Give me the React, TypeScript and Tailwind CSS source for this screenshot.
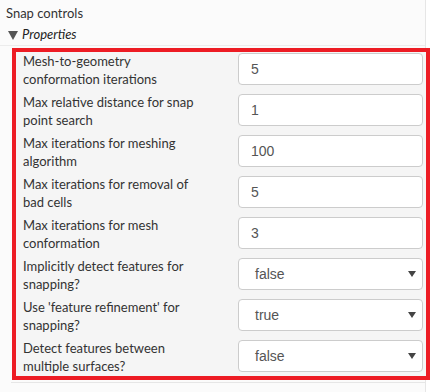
import React from "react";

type Row = { label: string; value: string; select?: boolean };

const rows: Row[] = [
  { label: "Mesh-to-geometry conformation iterations", value: "5" },
  { label: "Max relative distance for snap point search", value: "1" },
  { label: "Max iterations for meshing algorithm", value: "100" },
  { label: "Max iterations for removal of bad cells", value: "5" },
  { label: "Max iterations for mesh conformation", value: "3" },
  { label: "Implicitly detect features for snapping?", value: "false", select: true },
  { label: "Use 'feature refinement' for snapping?", value: "true", select: true },
  { label: "Detect features between multiple surfaces?", value: "false", select: true },
];

export default function App() {
  return (
    <div className="w-[433px] h-[392px] bg-white overflow-hidden" style={{ fontFamily: "Lato, 'Liberation Sans', sans-serif" }}>
      <div className="w-[426px] h-[392px] bg-[#fbfbfb] border-r border-[#e6e6e6] flex flex-col">
        <div className="h-[26px] pl-[6px] pt-[5px] text-[13px] leading-[17px] text-[#333]">Snap controls</div>
        <div className="h-[20px] flex items-start pl-[8px] border-b border-[#ececec] text-[13px] leading-[17px] text-[#222]">
          <svg width="10" height="10" viewBox="0 0 10 10" className="mt-[4px] mr-[4px]">
            <polygon points="0,1 10,1 5,10" fill="#555" />
          </svg>
          <span className="italic">Properties</span>
        </div>
        <div className="mt-[2px] ml-[12px] w-[418px] border-4 border-[#ed1c24] bg-[#f5f5f5] pt-[1px] pb-[4px] pl-[7px] pr-[3px] flex flex-col gap-[9px]">
          {rows.map((r, i) => (
            <div key={i} className="flex items-start h-[32px]">
              <div className="w-[172px] text-[13px] leading-[18px] text-[#333] -mt-[1px]">{r.label}</div>
              <div className="ml-auto w-[185px] h-[32px] bg-white border border-[#cccccc] rounded-[4px] flex items-center text-[14px] text-[#555]" style={{ fontFamily: "'Liberation Sans', Arial, sans-serif" }}>
                <span className={r.select ? "pl-[16px]" : "pl-[12px]"}>{r.value}</span>
                {r.select && (
                  <svg width="8" height="6" viewBox="0 0 8 6" className="ml-auto mr-[6px]">
                    <polygon points="0,0 8,0 4,6" fill="#444" />
                  </svg>
                )}
              </div>
            </div>
          ))}
        </div>
        <div className="mt-[2px] ml-[11px] border-t border-[#e6e6e6]" />
      </div>
    </div>
  );
}
